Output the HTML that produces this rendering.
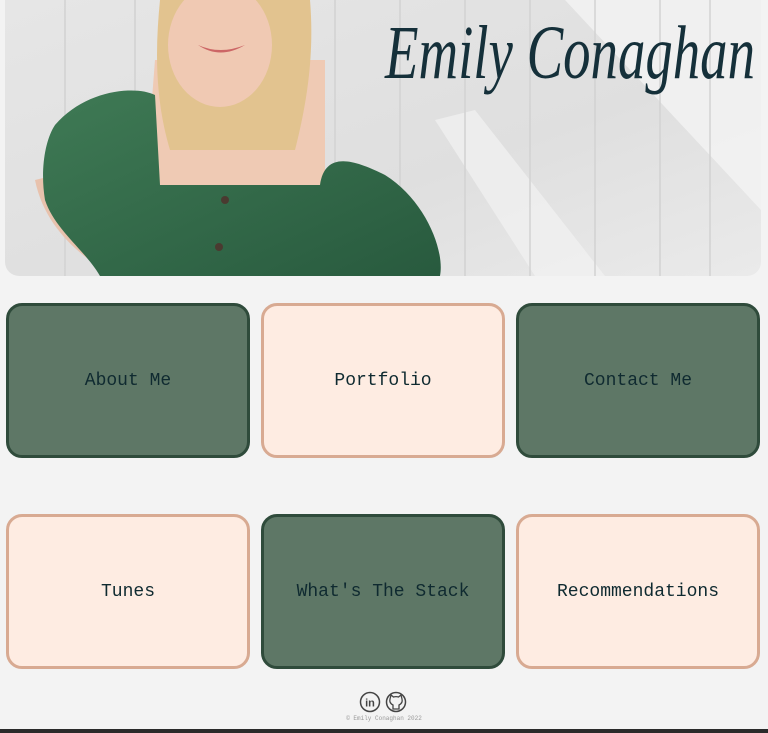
<!DOCTYPE html>
<html><head><style>
html,body{margin:0;padding:0;}
body{width:768px;height:733px;background:#f3f3f3;position:relative;overflow:hidden;font-family:"Liberation Mono",monospace;}
.hero{position:absolute;left:5px;top:0;width:756px;height:276px;border-radius:0 0 14px 14px;overflow:hidden;}
.card{position:absolute;width:238px;height:149px;border:3px solid;border-radius:16px;display:flex;align-items:center;justify-content:center;font-size:18px;color:#0f2a30;}
.g{background:#5e7766;border-color:#2f4b3b;}
.p{background:#feece2;border-color:#d8aa92;}
.foot{position:absolute;left:0;top:729px;width:768px;height:4px;background:#2a2a2a;}
</style></head><body>
<div class="hero">
<svg width="756" height="276" viewBox="0 0 756 276">
<defs>
<linearGradient id="w" x1="0" y1="0" x2="1" y2="1"><stop offset="0" stop-color="#e6e6e6"/><stop offset=".6" stop-color="#dfdfdf"/><stop offset="1" stop-color="#eaeaea"/></linearGradient>
<linearGradient id="d" x1="0" y1="0" x2="1" y2="1"><stop offset="0" stop-color="#3f7a55"/><stop offset="1" stop-color="#285a3e"/></linearGradient>
</defs>
<rect width="756" height="276" fill="url(#w)"/>
<polygon points="560,0 756,0 756,210" fill="#f4f4f4" opacity=".8"/>
<polygon points="430,120 530,276 600,276 470,110" fill="#f2f2f2" opacity=".7"/>
<g stroke="#d2d2d2" stroke-width="1.5"><line x1="60" y1="0" x2="60" y2="276"/><line x1="130" y1="0" x2="130" y2="276"/><line x1="330" y1="0" x2="330" y2="276"/><line x1="395" y1="0" x2="395" y2="276"/><line x1="460" y1="0" x2="460" y2="276"/><line x1="525" y1="0" x2="525" y2="276"/><line x1="590" y1="0" x2="590" y2="276"/><line x1="655" y1="0" x2="655" y2="276"/><line x1="705" y1="0" x2="705" y2="276"/></g>
<path d="M30,180 C40,230 80,260 110,276 L160,276 L150,150 Z" fill="#e8c2ad"/>
<path d="M150,60 L320,60 L320,190 L140,190 Z" fill="#efcab4"/>
<path d="M155,0 L305,0 C310,60 300,110 290,150 L165,150 C150,100 150,50 155,0 Z" fill="#e2c38f"/>
<ellipse cx="215" cy="45" rx="52" ry="62" fill="#f0c9b3"/>
<path d="M193,45 Q215,60 240,45 Q215,55 193,45" fill="#c66"/>
<path d="M50,125 C80,90 130,85 150,95 L155,185 L315,185 C320,150 350,160 380,175 C420,200 440,250 435,276 L95,276 C80,250 50,230 40,200 C35,170 40,140 50,125 Z" fill="url(#d)"/>
<circle cx="220" cy="200" r="4" fill="#4a3a30"/><circle cx="214" cy="247" r="4" fill="#4a3a30"/>
<text x="380" y="78" font-family="Liberation Serif,serif" font-style="italic" font-size="76" fill="#15303a" textLength="370" lengthAdjust="spacingAndGlyphs">Emily Conaghan</text>
</svg>
</div>
<div class="card g" style="left:6px;top:303px">About Me</div>
<div class="card p" style="left:261px;top:303px">Portfolio</div>
<div class="card g" style="left:516px;top:303px">Contact Me</div>
<div class="card p" style="left:6px;top:514px">Tunes</div>
<div class="card g" style="left:261px;top:514px">What's The Stack</div>
<div class="card p" style="left:516px;top:514px">Recommendations</div>
<svg style="position:absolute;left:359px;top:691px" width="50" height="24">
<circle cx="11" cy="11" r="9.5" fill="none" stroke="#444" stroke-width="1.5"/>
<text x="11" y="15.5" font-family="Liberation Sans,sans-serif" font-weight="bold" font-size="11" text-anchor="middle" fill="#444">in</text>
<circle cx="37" cy="11" r="9.5" fill="none" stroke="#444" stroke-width="1.5"/>
<path d="M31,8 L32,4 L34.5,6 Q37,5.3 39.5,6 L42,4 L43,8 Q44,12 40,14 L40,18 L34,18 L34,14 Q30,12 31,8 Z" fill="none" stroke="#444" stroke-width="1.3"/>
</svg>
<div style="position:absolute;left:0;width:768px;top:715px;text-align:center;font-size:6px;color:#999;">© Emily Conaghan 2022</div>
<div class="foot"></div>
</body></html>
